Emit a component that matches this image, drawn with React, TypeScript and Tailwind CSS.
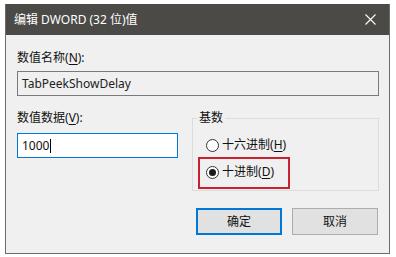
import React from "react";

const font = { fontFamily: '"Noto Sans", "Noto Sans CJK SC", sans-serif' };

function Key({ k }: { k: string }) {
  return (
    <>
      (<span className="underline underline-offset-2">{k}</span>)
    </>
  );
}

function Radio({ checked, children }: { checked?: boolean; children: React.ReactNode }) {
  return (
    <div className="flex h-[16px] items-center gap-[3px]">
      <div className="flex h-[13px] w-[13px] items-center justify-center rounded-full border border-[#333333] bg-white">
        {checked ? <div className="h-[7px] w-[7px] rounded-full bg-[#1a1a1a]" /> : null}
      </div>
      <span className="text-[12px] leading-[16px] text-[#111111]">{children}</span>
    </div>
  );
}

export default function App() {
  return (
    <div className="h-[257px] w-[396px] bg-white pt-[4px] pl-[5px]" style={font}>
      <div className="flex h-[250px] w-[385px] flex-col border-x border-b border-[#6b6b6b] bg-[#f0f0f0]">
        <div className="flex h-[31px] shrink-0 items-center justify-between bg-[#4b4a47] pl-[8px] pr-[10px]">
          <span className="text-[12px] leading-[16px] text-white">编辑 DWORD (32 位)值</span>
          <svg width="11" height="11" viewBox="0 0 11 11" className="mr-[3px]">
            <path d="M0.5 0.5 L10.5 10.5 M10.5 0.5 L0.5 10.5" stroke="#ffffff" strokeWidth="1.1" fill="none" />
          </svg>
        </div>

        <div className="flex flex-1 flex-col pl-[11px] pr-[10px] pt-[15px]">
          <div className="h-[16px] text-[12px] leading-[16px] text-[#111111]">
            数值名称<Key k="N" />:
          </div>
          <div className="mt-[5px] flex h-[25px] items-center border border-[#7a7a7a] bg-[#f0f0f0] pl-[4px] text-[12px] text-[#222222]">
            TabPeekShowDelay
          </div>

          <div className="mt-[14px] flex gap-[14px]">
            <div className="flex w-[161px] flex-col">
              <div className="h-[16px] text-[12px] leading-[16px] text-[#111111]">
                数值数据<Key k="V" />:
              </div>
              <div className="mt-[7px] flex h-[25px] items-center border border-[#0078d7] bg-white pl-[4px] text-[12px] text-[#111111]">
                1000
                <span className="ml-[1px] h-[14px] w-[1px] bg-black" />
              </div>
            </div>

            <fieldset className="w-[187px] border border-[#dcdcdc] pb-[1px]">
              <legend className="ml-[4px] px-[2px] text-[12px] leading-[16px] text-[#111111]">基数</legend>
              <div className="mt-[11px] pl-[13px]">
                <Radio>
                  十六进制<Key k="H" />
                </Radio>
              </div>
              <div className="ml-[5px] mt-[4px] h-[32px] w-[92px] border-2 border-[#c8212f] pl-[6px] pt-[5px]">
                <Radio checked>
                  十进制<Key k="D" />
                </Radio>
              </div>
            </fieldset>
          </div>

          <div className="mt-[17px] flex justify-end gap-[10px] pr-[1px]">
            <button className="h-[27px] w-[86px] border-2 border-[#0078d7] bg-[#e1e1e1] text-[12px] text-[#111111]">
              确定
            </button>
            <button className="h-[27px] w-[86px] border border-[#adadad] bg-[#e1e1e1] text-[12px] text-[#111111]">
              取消
            </button>
          </div>
        </div>
      </div>
    </div>
  );
}
